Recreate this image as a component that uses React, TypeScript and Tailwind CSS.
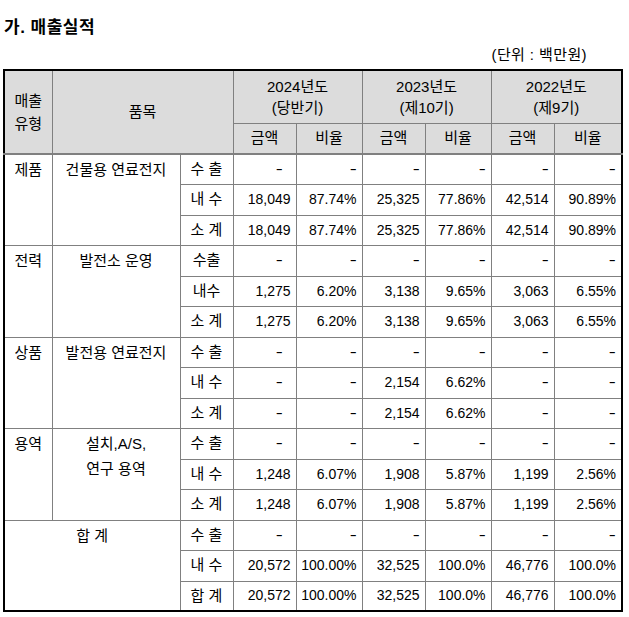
const years = [
  { y: "2024년도", p: "(당반기)" },
  { y: "2023년도", p: "(제10기)" },
  { y: "2022년도", p: "(제9기)" },
];

type Group = {
  type?: string;
  item: string[];
  labels: string[];
  values: string[][];
};

const dash = ["-", "-", "-", "-", "-", "-"];

const groups: Group[] = [
  {
    type: "제품",
    item: ["건물용 연료전지"],
    labels: ["수 출", "내 수", "소 계"],
    values: [
      dash,
      ["18,049", "87.74%", "25,325", "77.86%", "42,514", "90.89%"],
      ["18,049", "87.74%", "25,325", "77.86%", "42,514", "90.89%"],
    ],
  },
  {
    type: "전력",
    item: ["발전소 운영"],
    labels: ["수출", "내수", "소 계"],
    values: [
      dash,
      ["1,275", "6.20%", "3,138", "9.65%", "3,063", "6.55%"],
      ["1,275", "6.20%", "3,138", "9.65%", "3,063", "6.55%"],
    ],
  },
  {
    type: "상품",
    item: ["발전용 연료전지"],
    labels: ["수 출", "내 수", "소 계"],
    values: [
      dash,
      ["-", "-", "2,154", "6.62%", "-", "-"],
      ["-", "-", "2,154", "6.62%", "-", "-"],
    ],
  },
  {
    type: "용역",
    item: ["설치,A/S,", "연구 용역"],
    labels: ["수 출", "내 수", "소 계"],
    values: [
      dash,
      ["1,248", "6.07%", "1,908", "5.87%", "1,199", "2.56%"],
      ["1,248", "6.07%", "1,908", "5.87%", "1,199", "2.56%"],
    ],
  },
  {
    item: ["합 계"],
    labels: ["수 출", "내 수", "합 계"],
    values: [
      dash,
      ["20,572", "100.00%", "32,525", "100.0%", "46,776", "100.0%"],
      ["20,572", "100.00%", "32,525", "100.0%", "46,776", "100.0%"],
    ],
  },
];

const cell = "border border-[#808080] p-0";
const head = "border border-[#808080] bg-[#dcdcdc] font-normal p-0 text-center text-[15px]";

export default function App() {
  let rowIndex = 0;
  return (
    <div className="min-h-screen bg-white text-black font-['Liberation_Sans','Noto_Sans_CJK_KR',sans-serif] pl-[3px] pt-[17px]">
      {/* title */}
      <h2 className="text-[17px] leading-[22px] font-bold pl-[1px] tracking-[0.5px]">가. 매출실적</h2>
      <div className="flex justify-end pr-[42px] mt-[6px] text-[15px] leading-[19px] tracking-[0.4px]">
        (단위 : 백만원)
      </div>

      <table className="mt-[5px] w-[618px] table-fixed border-collapse border-2 border-black text-[14px]">
        <colgroup>
          <col className="w-[48px]" />
          <col className="w-[128px]" />
          <col className="w-[53px]" />
          <col className="w-[63px]" />
          <col className="w-[66px]" />
          <col className="w-[63px]" />
          <col className="w-[66px]" />
          <col className="w-[63px]" />
          <col className="w-[68px]" />
        </colgroup>
        <thead>
          <tr className="h-[53px]">
            <th rowSpan={2} className={`${head} border-b-2 leading-[23px]`}>
              매출
              <br />
              유형
            </th>
            <th rowSpan={2} colSpan={2} className={`${head} border-b-2`}>
              품목
            </th>
            {years.map((y) => (
              <th key={y.y} colSpan={2} className={`${head} leading-[21px]`}>
                {y.y}
                <br />
                {y.p}
              </th>
            ))}
          </tr>
          <tr className="h-[31px]">
            {years.map((y) => (
              <>
                <th key={y.y + "a"} className={`${head} border-b-2`}>금액</th>
                <th key={y.y + "b"} className={`${head} border-b-2`}>비율</th>
              </>
            ))}
          </tr>
        </thead>
        <tbody>
          {groups.map((g, gi) =>
            g.labels.map((label, li) => {
              const h = rowIndex++ % 2 === 0 ? "h-[30px]" : "h-[31px]";
              return (
                <tr key={`${gi}-${li}`} className={h}>
                  {li === 0 && g.type && (
                    <td rowSpan={3} className={`${cell} align-top text-center text-[15px] pt-[4px] leading-[22px]`}>
                      {g.type}
                    </td>
                  )}
                  {li === 0 && (
                    <td
                      rowSpan={3}
                      colSpan={g.type ? 1 : 2}
                      className={`${cell} align-top text-center text-[15px] pt-[4px]`}
                    >
                      {g.item.map((t) => (
                        <div key={t} className="leading-[28px] first:leading-[22px]">
                          {t}
                        </div>
                      ))}
                    </td>
                  )}
                  <td className={`${cell} text-center text-[15px]`}>{label}</td>
                  {g.values[li].map((v, vi) => (
                    <td
                      key={vi}
                      className={`${cell} text-right ${vi === 0 && v === "-" ? "pr-[13px]" : "pr-[5px]"}`}
                    >
                      {v === "-" ? <span className="inline-block origin-right scale-x-150">-</span> : v}
                    </td>
                  ))}
                </tr>
              );
            })
          )}
        </tbody>
      </table>
    </div>
  );
}
